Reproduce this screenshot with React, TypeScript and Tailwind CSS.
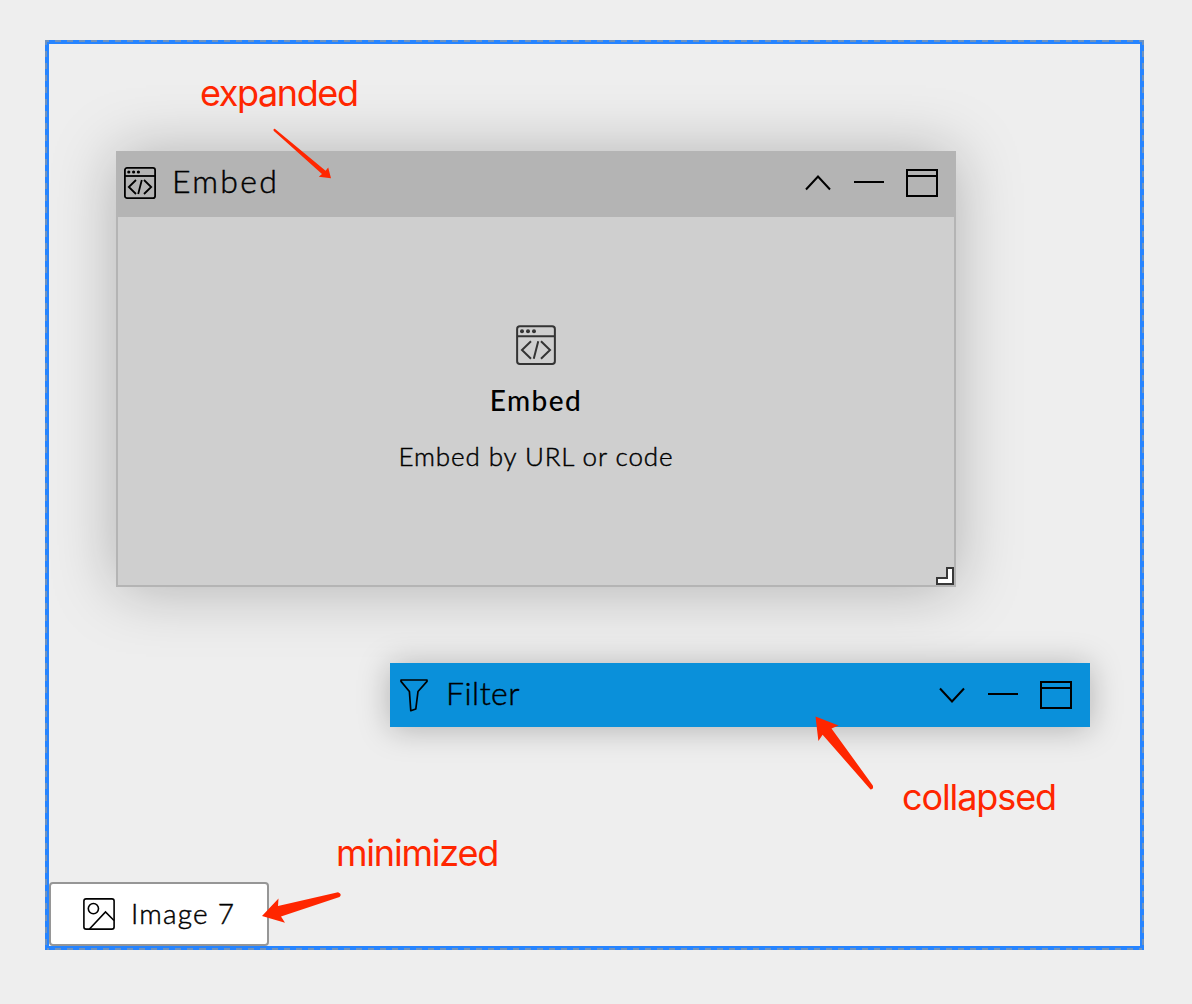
import React from "react";

const AVENIR = "font-['Lato',sans-serif]";
const NOTE = "font-['Inter',sans-serif]";

function EmbedIcon({ size, color }: { size: number; color: string }) {
  return (
    <svg width={size} height={size} viewBox="0 0 32 32" fill="none" stroke={color} strokeWidth={size > 32 ? 1.6 : 1.8}>
      <rect x="0.9" y="0.9" width="30.2" height="30.2" rx="2.2" />
      <path d="M1 9H31" />
      <path d="M12 13L4.8 20L12 27M20 13L27.2 20L20 27M17.8 13L14.2 27" />
      <g fill={color} stroke="none">
        <circle cx="4.8" cy="5" r="1.6" />
        <circle cx="9.6" cy="5" r="1.6" />
        <circle cx="14.4" cy="5" r="1.6" />
      </g>
    </svg>
  );
}

function FilterIcon() {
  return (
    <svg width="28" height="34" viewBox="0 0 28 34" fill="none" stroke="#000" strokeWidth="1.7" strokeLinejoin="round">
      <path d="M1 2H27V3.4L18 13.5L15.8 31L10.8 32.7L9.4 13.5L1 3.4Z" />
    </svg>
  );
}

function ImageIcon() {
  return (
    <svg width="32" height="32" viewBox="0 0 32 32" fill="none" stroke="#000" strokeWidth="1.6">
      <rect x="0.9" y="0.9" width="30.2" height="30.2" rx="2.2" />
      <circle cx="10.4" cy="10.6" r="5.1" />
      <path d="M6.5 31L22.5 14L31 22.5" />
    </svg>
  );
}

function Controls({ collapsed }: { collapsed?: boolean }) {
  return (
    <div className="ml-auto flex items-center">
      <svg width="26" height="16" viewBox="0 0 26 16" fill="none" stroke="#000" strokeWidth="2">
        <path d={collapsed ? "M1 1.5L13 14.5L25 1.5" : "M1 14.5L13 1.5L25 14.5"} />
      </svg>
      <div className="-mt-[2px] ml-[23px] h-[2px] w-[30px] bg-black" />
      <div className="ml-[22px] h-[28px] w-[32px] border-2 border-black">
        <div className="mt-1 h-[2px] bg-black" />
      </div>
    </div>
  );
}

export default function App() {
  return (
    <main className="relative h-[1004px] w-[1192px] overflow-hidden bg-[#eeeeee] text-black">
      <div className="absolute left-[45px] top-[40px] h-[910px] w-[1099px] border-4 border-[#2684ff]">
        <div className="absolute -left-1 -right-1 -top-1 h-[2px] bg-[repeating-linear-gradient(90deg,#6f92be_0_4px,#2684ff_4px_10px,#6f92be_10px_12.04px)]" />
        <div className="absolute -bottom-1 -left-1 -right-1 h-[2px] bg-[repeating-linear-gradient(90deg,#6f92be_0_4px,#2684ff_4px_10px,#6f92be_10px_12.04px)]" />
        <div className="absolute -bottom-1 -left-1 -top-1 w-[2px] bg-[repeating-linear-gradient(180deg,#6f92be_0_5px,#2684ff_5px_11px,#6f92be_11px_12px)]" />
        <div className="absolute -bottom-1 -right-1 -top-1 w-[2px] bg-[repeating-linear-gradient(180deg,#6f92be_0_5px,#2684ff_5px_11px,#6f92be_11px_12px)]" />
      </div>

      <section className="absolute left-[116px] top-[151px] flex h-[436px] w-[840px] flex-col border-2 border-[#b4b4b4] bg-[#cfcfcf] shadow-[0_2px_60px_rgba(0,0,0,0.26)]">
        <header className="-mx-[2px] -mt-[2px] flex h-[66px] shrink-0 items-center bg-[#b4b4b4] pb-[2px] pl-2 pr-[18px]">
          <EmbedIcon size={32} color="#000" />
          <span className={AVENIR + " -mt-1 ml-[16px] text-[32px] font-light leading-none tracking-[2.3px] [-webkit-text-stroke:0.45px_#000]"}>Embed</span>
          <Controls />
        </header>
        <div className="flex flex-col items-center pt-[108px]">
          <EmbedIcon size={40} color="#343434" />
          <h2 className={AVENIR + " mt-[19px] text-[28px] font-medium leading-8 tracking-[1.5px]"}>Embed</h2>
          <p className={AVENIR + " mt-[24px] whitespace-nowrap text-[26px] font-light leading-8 tracking-[0.9px] [-webkit-text-stroke:0.45px_#000]"}>Embed by URL or code</p>
        </div>
        <svg className="absolute bottom-0 right-0" width="18" height="18" viewBox="0 0 18 18">
          <path d="M11 1H17V17H1V11H11Z" fill="#fff" stroke="#393939" strokeWidth="2" />
        </svg>
      </section>

      <section className="absolute left-[390px] top-[663px] flex h-[64px] w-[700px] items-center bg-[#0a90da] pl-[10px] pr-[18px] shadow-[0_2px_32px_rgba(0,0,0,0.26)]">
        <FilterIcon />
        <span className={AVENIR + " -mt-1 ml-[18px] text-[32px] font-light leading-none tracking-[0.5px] [-webkit-text-stroke:0.45px_#000]"}>Filter</span>
        <Controls collapsed />
      </section>

      <section className="absolute left-[49px] top-[882px] flex h-[64px] w-[220px] items-center rounded-[4px] border-2 border-[#969696] bg-white pl-8">
        <ImageIcon />
        <span className={AVENIR + " -mt-[2px] ml-[16px] text-[28px] font-light leading-none tracking-[1.2px] [-webkit-text-stroke:0.45px_#000]"}>Image 7</span>
      </section>

      <span className={NOTE + " absolute left-[200px] top-[71px] text-[36px] leading-[44px] tracking-[-1.4px] text-[#ff2600]"}>expanded</span>
      <span className={NOTE + " absolute left-[902px] top-[775px] text-[36px] leading-[44px] tracking-[-1.1px] text-[#ff2600]"}>collapsed</span>
      <span className={NOTE + " absolute left-[336px] top-[831px] text-[36px] leading-[44px] tracking-[-1.2px] text-[#ff2600]"}>minimized</span>

      <svg className="absolute left-0 top-0" width="1192" height="1004" fill="#ff2600">
        <path d="M274.8 128.8L325.6 170.8L328.2 167.4L331 178.3L318.8 176.8L322 174L273.6 130.8Q273 128.6 274.8 128.8Z" />
        <path d="M815.5 716.5L838.5 725.5L831.5 728.5L872.8 785.5Q874 789.5 870.5 789.5L822.6 734.7L818.4 741Z" />
        <path d="M262 916L278.5 898.5L278 906L338 892.2Q342.5 894 339.5 897L281 916.5L285 922.8Z" />
      </svg>
    </main>
  );
}
